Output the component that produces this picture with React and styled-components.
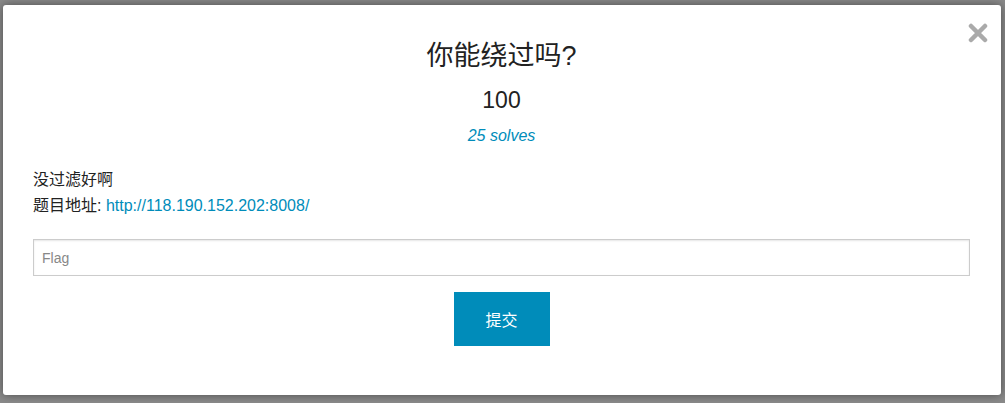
import React from "react";
import styled, { createGlobalStyle } from "styled-components";

const Global = createGlobalStyle`
  html, body {
    margin: 0;
    padding: 0;
    background: #8a8a8a;
    font-family: "Liberation Sans", Arial, "Noto Sans CJK SC", sans-serif;
    color: #222;
  }
`;

const Page = styled.div`
  width: 1005px;
  height: 403px;
  padding: 5px 4px 0 3px;
  box-sizing: border-box;
`;

const Modal = styled.div`
  position: relative;
  height: 390px;
  background: #fff;
  border-radius: 3px;
  box-shadow: 0 0 10px rgba(0, 0, 0, 0.45);
  padding: 32px 31px 0 30px;
  box-sizing: border-box;
  display: flex;
  flex-direction: column;
`;

const Close = styled.button`
  position: absolute;
  top: 18px;
  right: 13px;
  width: 20px;
  height: 20px;
  padding: 0;
  border: 0;
  background: none;
  cursor: pointer;
`;

const Title = styled.h3`
  margin: 0;
  text-align: center;
  font-size: 27px;
  font-weight: normal;
  line-height: 38px;
`;

const Points = styled.h4`
  margin: 9px 0 0;
  text-align: center;
  font-size: 23px;
  font-weight: normal;
  line-height: 32px;
`;

const Solves = styled.p`
  margin: 9px 0 0;
  text-align: center;
  font-size: 16px;
  font-style: italic;
  line-height: 22px;
  color: #008cba;
`;

const Description = styled.div`
  margin-top: 20px;
  font-size: 16px;
  line-height: 26px;
`;

const Link = styled.a`
  color: #008cba;
  text-decoration: none;
`;

const Form = styled.form`
  margin-top: 20px;
  display: flex;
  flex-direction: column;
  align-items: center;
  gap: 16px;
`;

const FlagInput = styled.input`
  width: 100%;
  height: 37px;
  box-sizing: border-box;
  border: 1px solid #ccc;
  box-shadow: inset 0 1px 2px rgba(0, 0, 0, 0.1);
  padding: 0 8px;
  font-family: inherit;
  font-size: 14px;
  color: #222;
  outline: none;
  &::placeholder {
    color: #888;
  }
`;

const Submit = styled.button`
  width: 96px;
  height: 54px;
  border: 0;
  background: #008cba;
  color: #fff;
  font-family: inherit;
  font-size: 16px;
  cursor: pointer;
`;

export default function App() {
  return (
    <Page>
      <Global />
      <Modal>
        <Close aria-label="Close">
          <svg width="20" height="20" viewBox="0 0 20 20">
            <path
              d="M3 3 L17 17 M17 3 L3 17"
              stroke="#aaa"
              strokeWidth="4.5"
              strokeLinecap="round"
            />
          </svg>
        </Close>
        <Title>你能绕过吗?</Title>
        <Points>100</Points>
        <Solves>25 solves</Solves>
        <Description>
          <div>没过滤好啊</div>
          <div>
            题目地址: <Link href="#">http://118.190.152.202:8008/</Link>
          </div>
        </Description>
        <Form onSubmit={(e) => e.preventDefault()}>
          <FlagInput placeholder="Flag" />
          <Submit type="submit">提交</Submit>
        </Form>
      </Modal>
    </Page>
  );
}
